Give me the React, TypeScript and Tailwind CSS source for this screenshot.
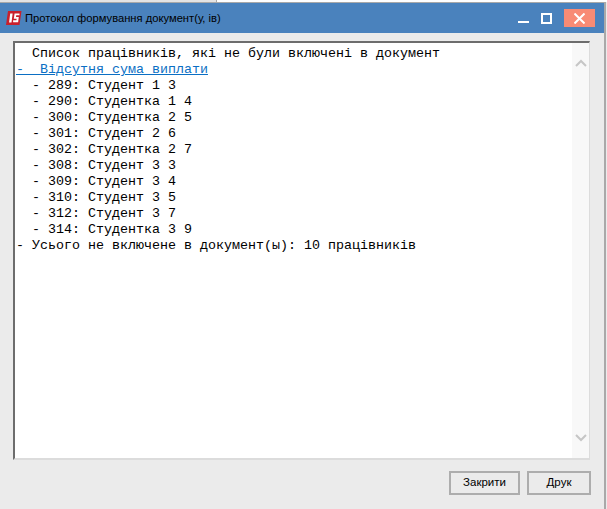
export default function App() {
  const rows = [
    "  - 289: Студент 1 3",
    "  - 290: Студентка 1 4",
    "  - 300: Студентка 2 5",
    "  - 301: Студент 2 6",
    "  - 302: Студентка 2 7",
    "  - 308: Студент 3 3",
    "  - 309: Студент 3 4",
    "  - 310: Студент 3 5",
    "  - 312: Студент 3 7",
    "  - 314: Студентка 3 9",
  ];
  return (
    <div className="w-[607px] h-[509px] overflow-hidden flex flex-col bg-[#ebebeb]">
      <div className="h-[2px] shrink-0 flex">
        <div className="w-[216px] bg-[#e4e4e4]" />
        <div className="w-px bg-[#a9a9a9]" />
        <div className="flex-1 bg-white" />
      </div>
      <div className="flex-1 flex flex-col border-t border-r-2 border-[#a9a9a9] mr-px">
        <div className="h-[30px] shrink-0 bg-[#4a82bd] flex items-center pl-[6px]">
          <svg width="16" height="14" viewBox="0 0 16 14" className="shrink-0">
            <path d="M2 0H15.5L13.5 14H0Z" fill="#c8202c" />
            <path d="M4.2 2.5H6.6L5.5 11.5H3.1Z" fill="#fff" />
            <path d="M13.5 3.4H9.4L8.9 6.9H11.7L11.3 10.2H7.1" fill="none" stroke="#fff" strokeWidth="1.9" />
          </svg>
          <span className="ml-[3px] text-[11.2px] text-black font-['Liberation_Sans',sans-serif] whitespace-nowrap">
            Протокол формування документ(у, ів)
          </span>
          <div className="ml-auto flex items-center">
            <svg width="11" height="11" viewBox="0 0 11 11" className="mr-[12px]"><rect x="0" y="8" width="11" height="2" fill="#fff" /></svg>
            <svg width="11" height="11" viewBox="0 0 11 11" className="mr-[12px]"><rect x="1" y="1" width="9" height="9" fill="none" stroke="#fff" strokeWidth="2" /></svg>
            <div className="w-[31px] h-[18px] bg-[#f88b75] flex items-center justify-center mr-[9px]">
              <svg width="11" height="11" viewBox="0 0 11 11"><path d="M0.5 0.5L10.5 10.5M10.5 0.5L0.5 10.5" stroke="#fff" strokeWidth="2" /></svg>
            </div>
          </div>
        </div>
        <div className="flex-1 flex flex-col px-[13px] pt-[8px] pb-[8px]">
          <div className="w-[577px] h-[419px] flex bg-white border-l-2 border-t-2 border-r border-b-2 border-l-[#6d6d6d] border-t-[#6d6d6d] border-r-[#dcdcdc] border-b-[#dcdcdc]">
            <div className="flex-1 pl-[1px] pt-[3px] font-['Liberation_Mono',monospace] text-[13.33px] leading-[16px] text-black whitespace-pre">
              <div>{"  Список працівників, які не були включені в документ"}</div>
              <div className="text-[#0b6fc4] underline">{"-  Відсутня сума виплати"}</div>
              {rows.map((r) => (
                <div key={r}>{r}</div>
              ))}
              <div>{"- Усього не включене в документ(ы): 10 працівників"}</div>
            </div>
            <div className="w-[17px] bg-[#f8f8f8] flex flex-col items-center justify-between py-[16px]">
              <svg width="12" height="8" viewBox="0 0 12 8"><path d="M1 7L6 2L11 7" fill="none" stroke="#c6c6c6" strokeWidth="2" /></svg>
              <svg width="12" height="8" viewBox="0 0 12 8"><path d="M1 1L6 6L11 1" fill="none" stroke="#c6c6c6" strokeWidth="2" /></svg>
            </div>
          </div>
          <div className="flex justify-end gap-[7px] mt-[11px] font-['Liberation_Sans',sans-serif] text-[11.5px] text-black">
            <button className="w-[71px] h-[24px] border-2 border-[#adadad] bg-[#ebebeb]">Закрити</button>
            <button className="w-[64px] h-[24px] border-2 border-[#adadad] bg-[#ebebeb]">Друк</button>
          </div>
        </div>
      </div>
    </div>
  );
}
